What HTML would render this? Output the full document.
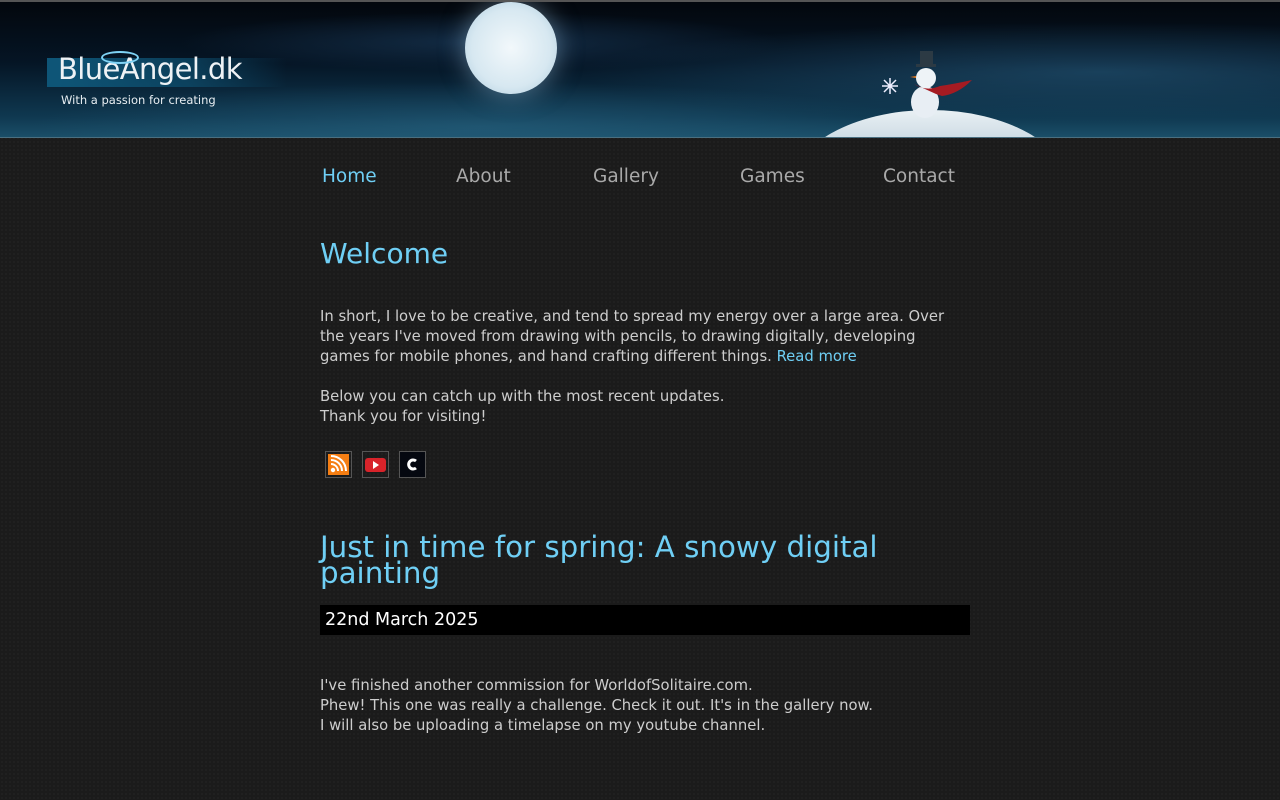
<!DOCTYPE html>
<html><head><meta charset="utf-8">
<style>
html,body{margin:0;padding:0}
body{width:1280px;height:800px;overflow:hidden;background:#1b1b1b;background-image:radial-gradient(#222 1px,transparent 1px);background-size:4px 4px;font-family:"Liberation Sans","DejaVu Sans",sans-serif;color:#cfcfcf}
#hdr{position:absolute;left:0;top:0;width:1280px;height:138px;border-top:2px solid #555;box-sizing:border-box;border-bottom:1px solid #4a6f80;overflow:hidden;
background:
radial-gradient(ellipse 520px 50px at 1100px 70px,rgba(40,95,130,.55),transparent),
radial-gradient(ellipse 450px 45px at 480px 125px,rgba(40,100,130,.55),transparent),
radial-gradient(ellipse 300px 30px at 480px 40px,rgba(25,55,85,.7),transparent),
linear-gradient(#03070d 0,#051525 45%,#0f3850 85%,#1a4e68 100%);}
#moon{position:absolute;left:465px;top:0px;width:92px;height:92px;border-radius:50%;background:radial-gradient(circle,#f2f8fb 0,#d7e8f1 60%,#a9c9dc 100%);box-shadow:0 0 25px rgba(160,200,230,.5)}
#hill{position:absolute;left:790px;top:108px;width:280px;height:80px;border-radius:50% 50% 0 0/100% 100% 0 0;background:linear-gradient(#e9f0f4,#9fb9c9)}
#logo{position:absolute;left:47px;top:56px;width:240px;height:29px;background:linear-gradient(90deg,#0e5577 0,#0e5577 5%,rgba(14,85,119,.6) 60%,transparent)}
#logo .t{position:absolute;left:11px;top:-6px;font-size:29px;color:#eef2f5;font-family:"DejaVu Sans",sans-serif;letter-spacing:-.6px}
#logo .s{position:absolute;left:14px;top:35px;font-size:11.5px;color:#e8eef2;font-family:"DejaVu Sans",sans-serif}
#halo{position:absolute;left:101px;top:49px;width:34px;height:9px;border:2px solid #7fd3f5;border-radius:50%}
nav a{position:absolute;top:166px;font-size:18.5px;color:#a9a9a9;text-decoration:none;font-family:"DejaVu Sans",sans-serif}
h1{position:absolute;margin:0;font-weight:normal;color:#6fcff5;font-family:"DejaVu Sans",sans-serif}
p{position:absolute;left:320px;margin:0;font-size:14.8px;line-height:20px;width:640px;font-family:"DejaVu Sans",sans-serif;color:#cdcdcd}
a.b{color:#6fcff5;text-decoration:none}
.ic{position:absolute;top:451px;width:27px;height:27px;border:1px solid #555;box-sizing:border-box}
</style></head><body>
<div id="hdr">
 <div id="moon"></div>
 <div id="hill"></div>
 <div id="logo"><span class="t">BlueAngel.dk</span><span class="s">With a passion for creating</span></div>
 <div id="halo"></div>
 <svg style="position:absolute;left:870px;top:44px" width="110" height="80">
  <path d="M12 40 l16 0 M20 32 l0 16 M14 34 l12 12 M26 34 l-12 12" stroke="#eef" stroke-width="1.5"/>
  <ellipse cx="55" cy="56" rx="14" ry="16" fill="#e8eef4"/>
  <circle cx="56" cy="32" r="10" fill="#eef3f7"/>
  <rect x="50" y="5" width="13" height="14" fill="#2c3a44"/><rect x="46" y="18" width="20" height="3" fill="#2c3a44"/>
  <path d="M44 38 q12 8 26 2 q14 -2 32 -6 q-14 14 -30 16 l-6 -2 z" fill="#a51b22"/>
  <path d="M46 30 l-6 1 l6 1z" fill="#e57a20"/>
 </svg>
</div>
<nav>
 <a style="left:322px;color:#6fcff5">Home</a>
 <a style="left:456px">About</a>
 <a style="left:593px">Gallery</a>
 <a style="left:740px">Games</a>
 <a style="left:883px">Contact</a>
</nav>
<h1 style="left:320px;top:237px;font-size:28px">Welcome</h1>
<p style="top:307px">In short, I love to be creative, and tend to spread my energy over a large area. Over the years I've moved from drawing with pencils, to drawing digitally, developing games for mobile phones, and hand crafting different things. <a class="b">Read more</a></p>
<p style="top:387px">Below you can catch up with the most recent updates.<br>Thank you for visiting!</p>
<div class="ic" style="left:325px"><svg width="25" height="25"><rect x="2" y="2" width="21" height="21" fill="#f57e13"/><circle cx="7" cy="18" r="2.2" fill="#fff"/><path d="M5 12a7 7 0 0 1 7 7M5 8a11 11 0 0 1 11 11M5 4a15 15 0 0 1 15 15" stroke="#fff" stroke-width="2" fill="none"/></svg></div>
<div class="ic" style="left:362px"><svg width="25" height="25"><rect x="2" y="6" width="21" height="14" rx="3" fill="#d8232a"/><path d="M10 9l6 4-6 4z" fill="#fff"/></svg></div>
<div class="ic" style="left:399px;background:#050810"><svg width="25" height="25"><path d="M16 9a4.5 4.5 0 1 0 0 7" stroke="#fff" stroke-width="3" fill="none"/></svg></div>
<h1 style="left:320px;top:534px;font-size:29.3px;line-height:26px;width:650px">Just in time for spring: A snowy digital painting</h1>
<div style="position:absolute;left:320px;top:605px;width:650px;height:30px;background:#000;color:#fff;font-size:17.5px;line-height:30px;box-sizing:border-box;padding-left:5px;font-family:'DejaVu Sans',sans-serif">22nd March 2025</div>
<p style="top:676px">I've finished another commission for WorldofSolitaire.com.<br>Phew! This one was really a challenge. Check it out. It's in the gallery now.<br>I will also be uploading a timelapse on my youtube channel.</p>
</body></html>
